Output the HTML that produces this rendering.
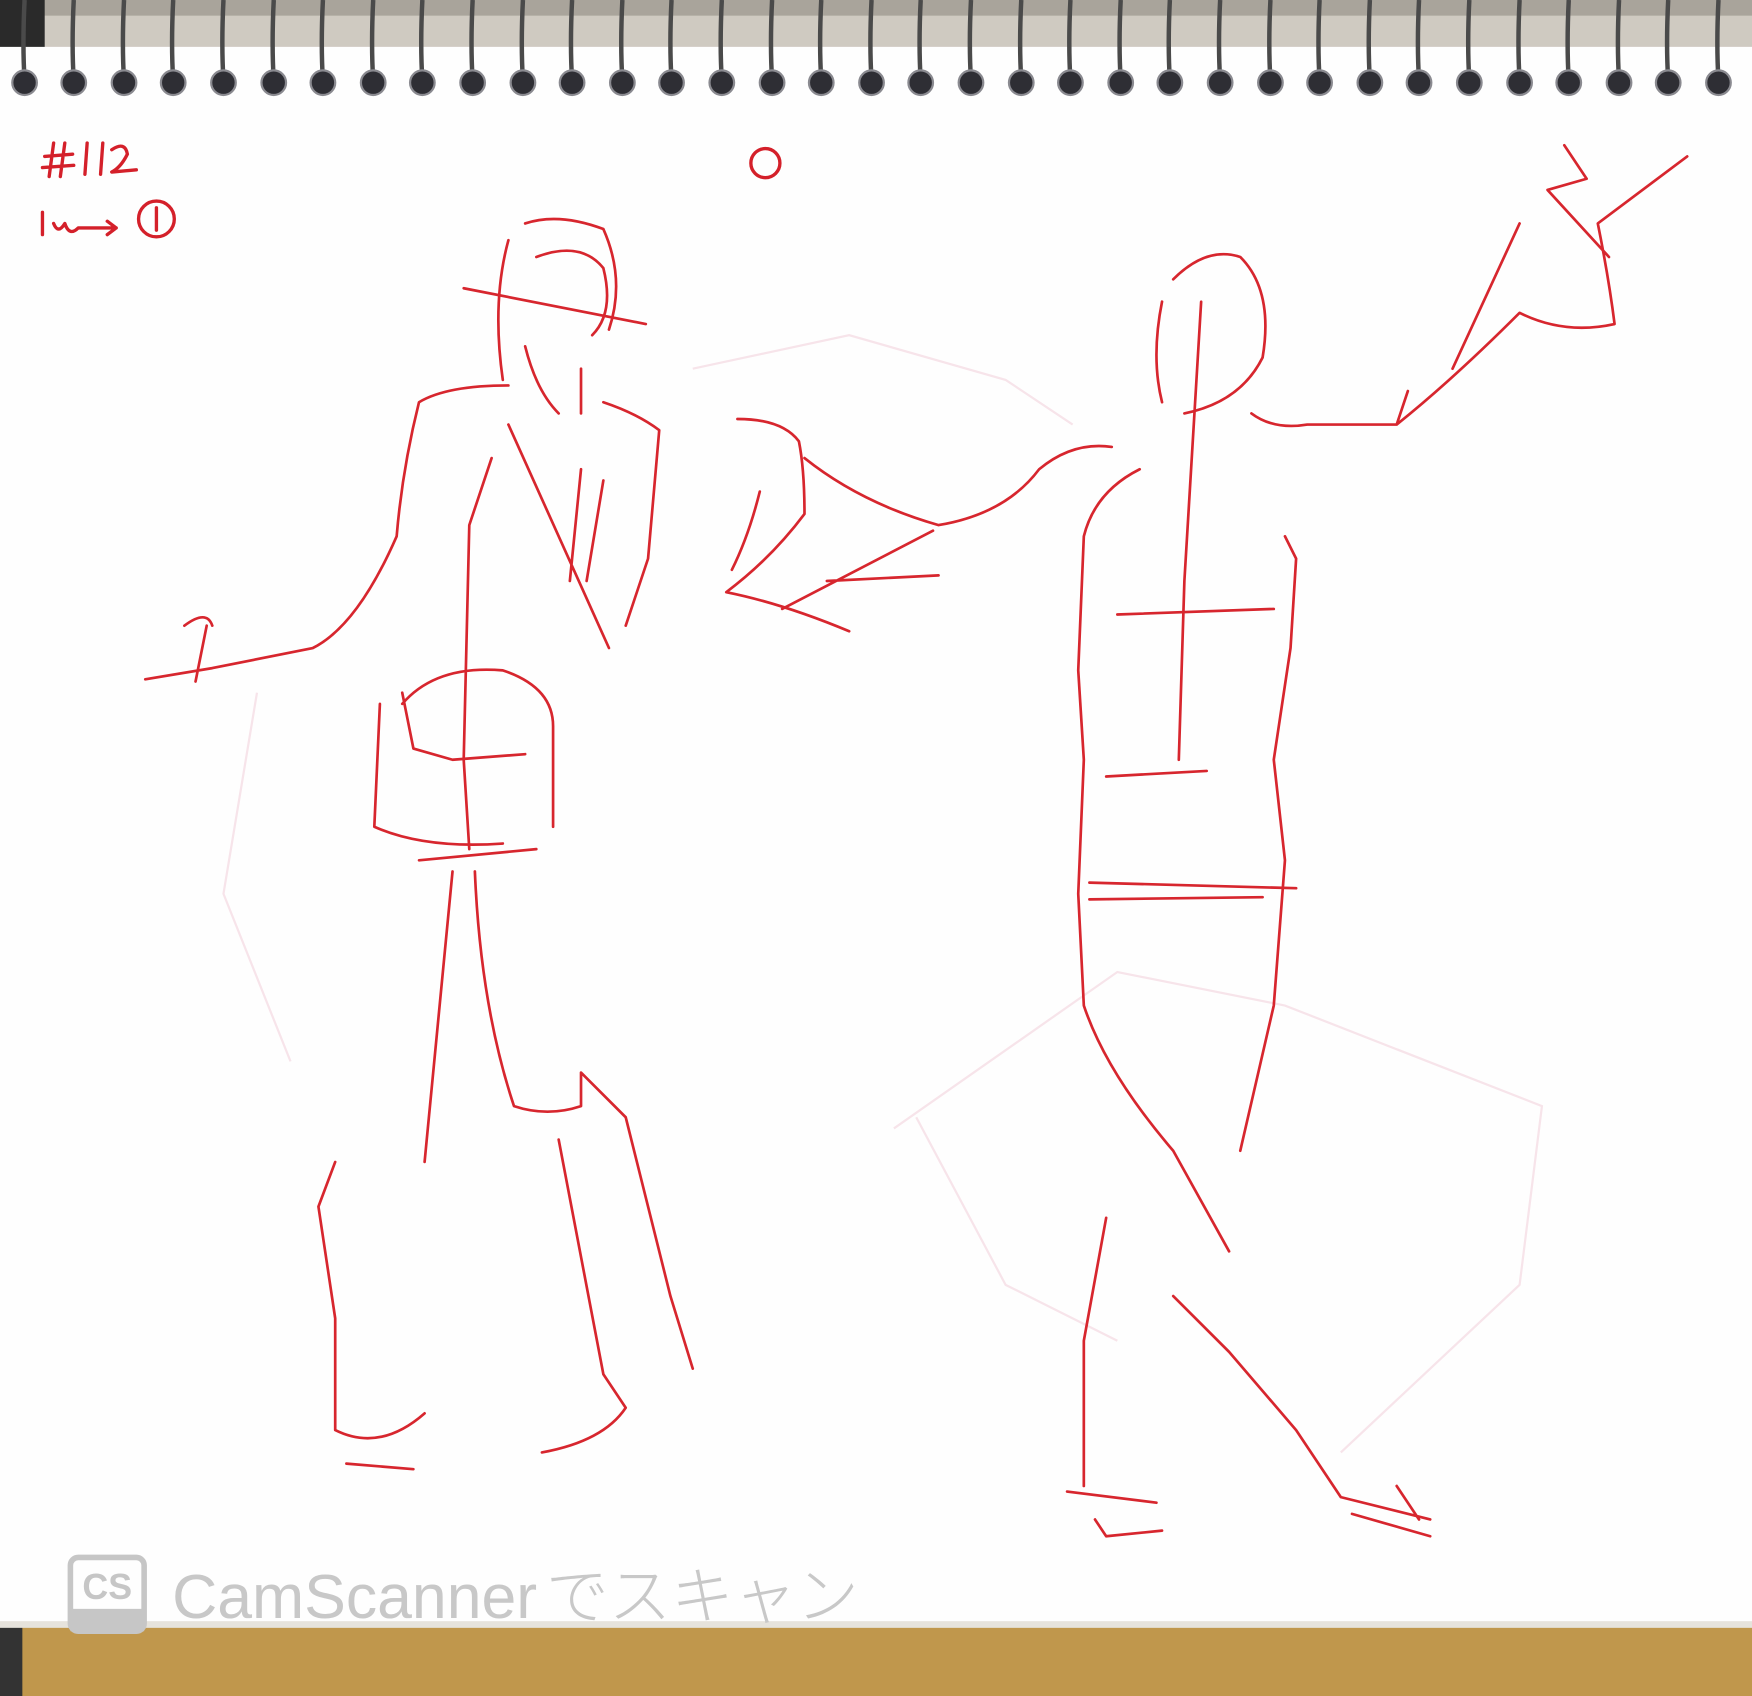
<!DOCTYPE html>
<html><head><meta charset="utf-8"><style>
html,body{margin:0;padding:0;background:#fff}
svg{display:block}
</style></head><body>
<svg width="1752" height="1696" viewBox="0 0 1568 1518" preserveAspectRatio="none" xmlns="http://www.w3.org/2000/svg">
<rect x="0" y="0" width="1568" height="1518" fill="#fff"/>
<rect x="0" y="0" width="1568" height="42" fill="#cfcac1"/>
<rect x="0" y="0" width="1568" height="14" fill="#a9a49b"/>
<rect x="0" y="0" width="40" height="42" fill="#2a2a2a"/>
<rect x="0" y="42" width="1568" height="1412" fill="#fefefe"/>
<rect x="0" y="1456" width="1568" height="62" fill="#c0974c"/>
<rect x="0" y="1456" width="20" height="62" fill="#333"/>
<rect x="0" y="1451" width="1568" height="6" fill="#e6e3dc"/>
<g fill="none" stroke="#4a4a4a" stroke-width="4">
<path d="M22 0 Q20 40 22 72"/><path d="M66 0 Q64 40 66 72"/><path d="M111 0 Q109 40 111 72"/><path d="M155 0 Q153 40 155 72"/><path d="M200 0 Q198 40 200 72"/><path d="M245 0 Q243 40 245 72"/><path d="M289 0 Q287 40 289 72"/><path d="M334 0 Q332 40 334 72"/><path d="M378 0 Q376 40 378 72"/><path d="M423 0 Q421 40 423 72"/><path d="M468 0 Q466 40 468 72"/><path d="M512 0 Q510 40 512 72"/><path d="M557 0 Q555 40 557 72"/><path d="M601 0 Q599 40 601 72"/><path d="M646 0 Q644 40 646 72"/><path d="M691 0 Q689 40 691 72"/><path d="M735 0 Q733 40 735 72"/><path d="M780 0 Q778 40 780 72"/><path d="M824 0 Q822 40 824 72"/><path d="M869 0 Q867 40 869 72"/><path d="M914 0 Q912 40 914 72"/><path d="M958 0 Q956 40 958 72"/><path d="M1003 0 Q1001 40 1003 72"/><path d="M1047 0 Q1045 40 1047 72"/><path d="M1092 0 Q1090 40 1092 72"/><path d="M1137 0 Q1135 40 1137 72"/><path d="M1181 0 Q1179 40 1181 72"/><path d="M1226 0 Q1224 40 1226 72"/><path d="M1270 0 Q1268 40 1270 72"/><path d="M1315 0 Q1313 40 1315 72"/><path d="M1360 0 Q1358 40 1360 72"/><path d="M1404 0 Q1402 40 1404 72"/><path d="M1449 0 Q1447 40 1449 72"/><path d="M1493 0 Q1491 40 1493 72"/><path d="M1538 0 Q1536 40 1538 72"/>
</g>
<g fill="#2e2e34" stroke="#8a8a90" stroke-width="2">
<circle cx="22" cy="74" r="11"/><circle cx="66" cy="74" r="11"/><circle cx="111" cy="74" r="11"/><circle cx="155" cy="74" r="11"/><circle cx="200" cy="74" r="11"/><circle cx="245" cy="74" r="11"/><circle cx="289" cy="74" r="11"/><circle cx="334" cy="74" r="11"/><circle cx="378" cy="74" r="11"/><circle cx="423" cy="74" r="11"/><circle cx="468" cy="74" r="11"/><circle cx="512" cy="74" r="11"/><circle cx="557" cy="74" r="11"/><circle cx="601" cy="74" r="11"/><circle cx="646" cy="74" r="11"/><circle cx="691" cy="74" r="11"/><circle cx="735" cy="74" r="11"/><circle cx="780" cy="74" r="11"/><circle cx="824" cy="74" r="11"/><circle cx="869" cy="74" r="11"/><circle cx="914" cy="74" r="11"/><circle cx="958" cy="74" r="11"/><circle cx="1003" cy="74" r="11"/><circle cx="1047" cy="74" r="11"/><circle cx="1092" cy="74" r="11"/><circle cx="1137" cy="74" r="11"/><circle cx="1181" cy="74" r="11"/><circle cx="1226" cy="74" r="11"/><circle cx="1270" cy="74" r="11"/><circle cx="1315" cy="74" r="11"/><circle cx="1360" cy="74" r="11"/><circle cx="1404" cy="74" r="11"/><circle cx="1449" cy="74" r="11"/><circle cx="1493" cy="74" r="11"/><circle cx="1538" cy="74" r="11"/>
</g>
<g fill="none" stroke="#d4202a" stroke-width="3" stroke-linecap="round" stroke-linejoin="round">
<path d="M40 140 L65 138 M38 150 L66 148 M48 128 L44 158 M58 128 L54 158 M78 128 L76 156 M92 128 L90 156 M100 134 Q112 126 114 138 Q108 150 100 154 L122 152"/>
<path d="M38 190 L38 210 M48 200 Q52 210 58 200 Q62 212 70 204 L104 204 M96 198 L104 204 L96 210"/>
<circle cx="140" cy="196" r="16"/><path d="M140 186 L140 206"/>
<circle cx="685" cy="146" r="13"/>
</g>
<g fill="none" stroke="#f7e4ea" stroke-width="2">
<path d="M800 1010 L1000 870 L1150 900 L1380 990 L1360 1150 L1200 1300"/>
<path d="M820 1000 L900 1150 L1000 1200"/>
<path d="M620 330 L760 300 L900 340 L960 380"/>
<path d="M230 620 L200 800 L260 950"/>
</g>
<g fill="none" stroke="#d7262e" stroke-width="2.4" stroke-linecap="round" stroke-linejoin="round">
<path d="M470 200 Q500 190 540 205 Q560 250 545 295 M455 215 Q440 270 450 340 M480 230 Q520 215 540 240 Q550 280 530 300"/>
<path d="M415 258 Q500 275 578 290"/>
<path d="M470 310 Q480 350 500 370 M520 330 L520 370"/>
<path d="M455 345 Q400 345 375 360 Q360 420 355 480 Q320 560 280 580 Q230 590 190 598 L130 608 M165 560 Q185 545 190 560 M185 560 L175 610"/>
<path d="M540 360 Q570 370 590 385 Q585 440 580 500 L560 560 M455 380 L545 580 M520 420 L510 520 M540 430 L525 520"/>
<path d="M440 410 L420 470 L415 680 L420 760"/>
<path d="M360 630 Q390 595 450 600 Q495 615 495 650 L495 740 M360 620 L370 670 L405 680 L470 675 M340 630 L335 740 Q380 760 450 755"/>
<path d="M375 770 L480 760"/>
<path d="M405 780 L380 1040 M425 780 Q430 900 460 990 Q490 1000 520 990 L520 960 L560 1000 L600 1160 L620 1225"/>
<path d="M300 1040 L285 1080 L300 1180 L300 1280 Q340 1300 380 1265 M310 1310 L370 1315"/>
<path d="M500 1020 L540 1230 L560 1260 Q540 1290 485 1300"/>
</g>
<g fill="none" stroke="#d7262e" stroke-width="2.4" stroke-linecap="round" stroke-linejoin="round">
<path d="M660 375 Q700 375 715 395 Q720 420 720 460 Q690 500 650 530 Q700 540 760 565 M655 510 Q670 480 680 440"/>
<path d="M720 410 Q770 450 840 470 Q900 460 930 420 Q960 395 995 400 M835 475 L700 545 M740 520 L840 515"/>
<path d="M1050 250 Q1080 220 1110 230 Q1140 260 1130 320 Q1110 360 1060 370 M1040 270 Q1030 320 1040 360 M1075 270 L1060 520 L1055 680"/>
<path d="M1120 370 Q1140 385 1170 380 L1250 380 Q1300 340 1360 280 Q1400 300 1445 290 Q1440 250 1430 200 L1510 140 M1360 200 L1300 330 M1400 130 L1420 160 L1385 170 L1440 230 M1250 380 L1260 350"/>
<path d="M1020 420 Q980 440 970 480 L965 600 L970 680 L965 800 L970 900 Q990 960 1050 1030 L1100 1120"/>
<path d="M1150 480 L1160 500 L1155 580 L1140 680 L1150 770 L1140 900 L1110 1030"/>
<path d="M1000 550 L1140 545 M990 695 L1080 690 M975 790 L1160 795 M975 805 L1130 803"/>
<path d="M990 1090 L970 1200 L970 1330 M955 1335 L1035 1345 M980 1360 L990 1375 L1040 1370"/>
<path d="M1050 1160 L1100 1210 L1160 1280 L1200 1340 L1280 1360 M1250 1330 L1270 1360 M1210 1355 L1280 1375"/>
</g>
<g>
<rect x="63" y="1394" width="66" height="66" rx="7" fill="none" stroke="#c6c6c6" stroke-width="5"/>
<rect x="63" y="1440" width="66" height="20" fill="#c6c6c6"/>
<text x="96" y="1431" text-anchor="middle" font-family="Liberation Sans, sans-serif" font-weight="bold" font-size="32" fill="#c6c6c6">CS</text>
<text x="154" y="1448" font-family="Liberation Sans, 'Noto Sans CJK JP', sans-serif" font-size="56" fill="#c8c8c8">CamScanner<tspan font-family="'Noto Sans CJK JP', sans-serif" font-weight="300" dx="8">でスキャン</tspan></text>
</g>
</svg>
</body></html>
